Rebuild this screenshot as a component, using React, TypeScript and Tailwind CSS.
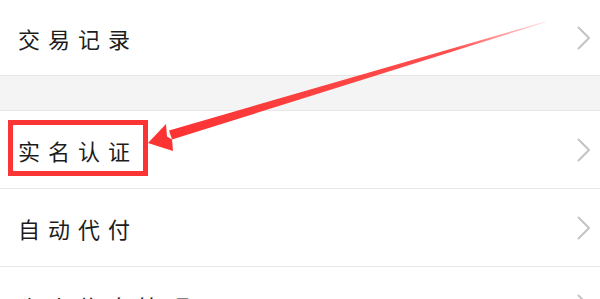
import React from "react";

const Chevron = () => (
  <svg width="14" height="24" viewBox="0 0 14 24" className="shrink-0">
    <polyline points="1.5,1.5 12,12 1.5,22.5" fill="none" stroke="#c4c4c8" strokeWidth="2" strokeLinecap="round" strokeLinejoin="round" />
  </svg>
);

const Row = ({ label, h }: { label: string; h: string }) => (
  <div className={`flex items-center justify-between bg-white pl-[18px] pr-[9px] ${h}`}>
    <span
      className="text-[22px] leading-none tracking-[8px] text-[#1c1c1c]"
      style={{ fontFamily: '"Noto Sans CJK SC", "Noto Sans CJK JP", sans-serif' }}
    >
      {label}
    </span>
    <Chevron />
  </div>
);

export default function App() {
  return (
    <div className="relative w-[600px] h-[299px] overflow-hidden bg-white">
      <div className="flex flex-col">
        <Row label="交易记录" h="h-[75px]" />
        <div className="h-[36px] bg-[#f4f4f4] border-y border-[#e6e6e6]" />
        <Row label="实名认证" h="h-[77px]" />
        <div className="h-px bg-[#e6e6e6]" />
        <Row label="自动代付" h="h-[77px]" />
        <div className="h-px bg-[#e6e6e6]" />
        <Row label="个人信息管理" h="h-[77px]" />
      </div>
      <svg className="absolute inset-0 pointer-events-none" width="600" height="299" viewBox="0 0 600 299">
        <defs>
          <linearGradient id="fade" x1="545" y1="22" x2="175" y2="135" gradientUnits="userSpaceOnUse">
            <stop offset="0" stopColor="#ff3b3b" stopOpacity="0.15" />
            <stop offset="0.25" stopColor="#ff3b3b" stopOpacity="0.9" />
            <stop offset="1" stopColor="#fc3333" stopOpacity="1" />
          </linearGradient>
        </defs>
        <rect x="10.5" y="122.5" width="135" height="51" fill="none" stroke="#fb3535" strokeWidth="5" />
        <polygon points="545.2,21.5 544.8,22.5 172,139.5 169,130.5" fill="url(#fade)" />
        <polygon points="148,143 166,124 167,136.5 172,139.5 173,151" fill="#fc3333" />
      </svg>
    </div>
  );
}
